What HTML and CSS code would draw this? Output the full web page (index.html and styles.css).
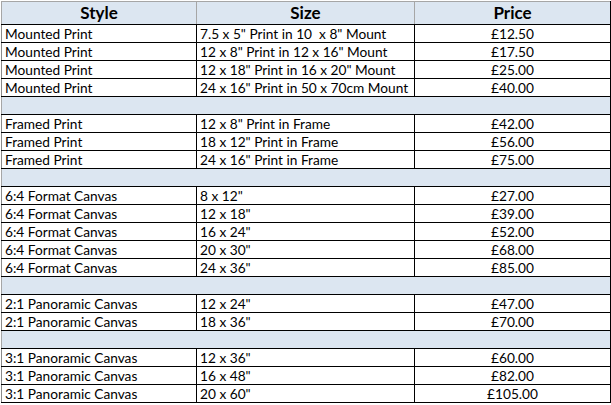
FILE: index.html
```html
<!DOCTYPE html>
<html>
<head>
<meta charset="utf-8">
<link rel="stylesheet" href="styles.css">
</head>
<body>
<div class="wrap">
<table class="prices">
<colgroup><col class="c1"><col class="c2"><col class="c3"></colgroup>
<thead>
<tr><th>Style</th><th>Size</th><th>Price</th></tr>
</thead>
<tbody>
<tr><td>Mounted Print</td><td>7.5 x 5" Print in 10&nbsp; x 8" Mount</td><td class="p">£12.50</td></tr>
<tr><td>Mounted Print</td><td>12 x 8" Print in 12 x 16" Mount</td><td class="p">£17.50</td></tr>
<tr><td>Mounted Print</td><td>12 x 18" Print in 16 x 20" Mount</td><td class="p">£25.00</td></tr>
<tr><td>Mounted Print</td><td>24 x 16" Print in 50 x 70cm Mount</td><td class="p">£40.00</td></tr>
<tr class="gap"><td colspan="3"></td></tr>
<tr><td>Framed Print</td><td>12 x 8" Print in Frame</td><td class="p">£42.00</td></tr>
<tr><td>Framed Print</td><td>18 x 12" Print in Frame</td><td class="p">£56.00</td></tr>
<tr><td>Framed Print</td><td>24 x 16" Print in Frame</td><td class="p">£75.00</td></tr>
<tr class="gap"><td colspan="3"></td></tr>
<tr><td>6:4 Format Canvas</td><td>8 x 12"</td><td class="p">£27.00</td></tr>
<tr><td>6:4 Format Canvas</td><td>12 x 18"</td><td class="p">£39.00</td></tr>
<tr><td>6:4 Format Canvas</td><td>16 x 24"</td><td class="p">£52.00</td></tr>
<tr><td>6:4 Format Canvas</td><td>20 x 30"</td><td class="p">£68.00</td></tr>
<tr><td>6:4 Format Canvas</td><td>24 x 36"</td><td class="p">£85.00</td></tr>
<tr class="gap"><td colspan="3"></td></tr>
<tr><td>2:1 Panoramic Canvas</td><td>12 x 24"</td><td class="p">£47.00</td></tr>
<tr><td>2:1 Panoramic Canvas</td><td>18 x 36"</td><td class="p">£70.00</td></tr>
<tr class="gap"><td colspan="3"></td></tr>
<tr><td>3:1 Panoramic Canvas</td><td>12 x 36"</td><td class="p">£60.00</td></tr>
<tr><td>3:1 Panoramic Canvas</td><td>16 x 48"</td><td class="p">£82.00</td></tr>
<tr><td>3:1 Panoramic Canvas</td><td>20 x 60"</td><td class="p">£105.00</td></tr>
</tbody>
</table>
</div>
</body>
</html>
```
FILE: styles.css
```css
html, body {
  margin: 0;
  padding: 0;
  background: #ffffff;
}
.wrap {
  padding: 1px 0 0 1px;
}
.prices {
  border-collapse: collapse;
  table-layout: fixed;
  width: 609px;
  font-family: Lato, "Open Sans", sans-serif;
  font-size: 13.7px;
  color: #000;
}
.c1 { width: 195px; }
.c2 { width: 218px; }
.c3 { width: 196px; }
.prices th {
  height: 22px;
  padding: 0;
  background: #dce6f1;
  font-size: 17px;
  font-weight: bold;
  text-align: center;
  border-top: 1px solid #a6a6a6;
  border-left: 1px solid #a6a6a6;
  border-bottom: 1px solid #000;
  line-height: 22px;
}
.prices th:last-child {
  border-right: 1px solid #000;
}
.prices td {
  height: 17px;
  padding: 0 0 0 3px;
  border: 1px solid #000;
  line-height: 17px;
  white-space: nowrap;
  overflow: hidden;
  vertical-align: bottom;
}
.prices td:first-child {
  border-left: 1px solid #8a8a8a;
}
.prices td.p {
  text-align: center;
  padding: 0;
}
.prices tr.gap td {
  background: #dce6f1;
  border-left: 1px solid #a6a6a6;
}
```
